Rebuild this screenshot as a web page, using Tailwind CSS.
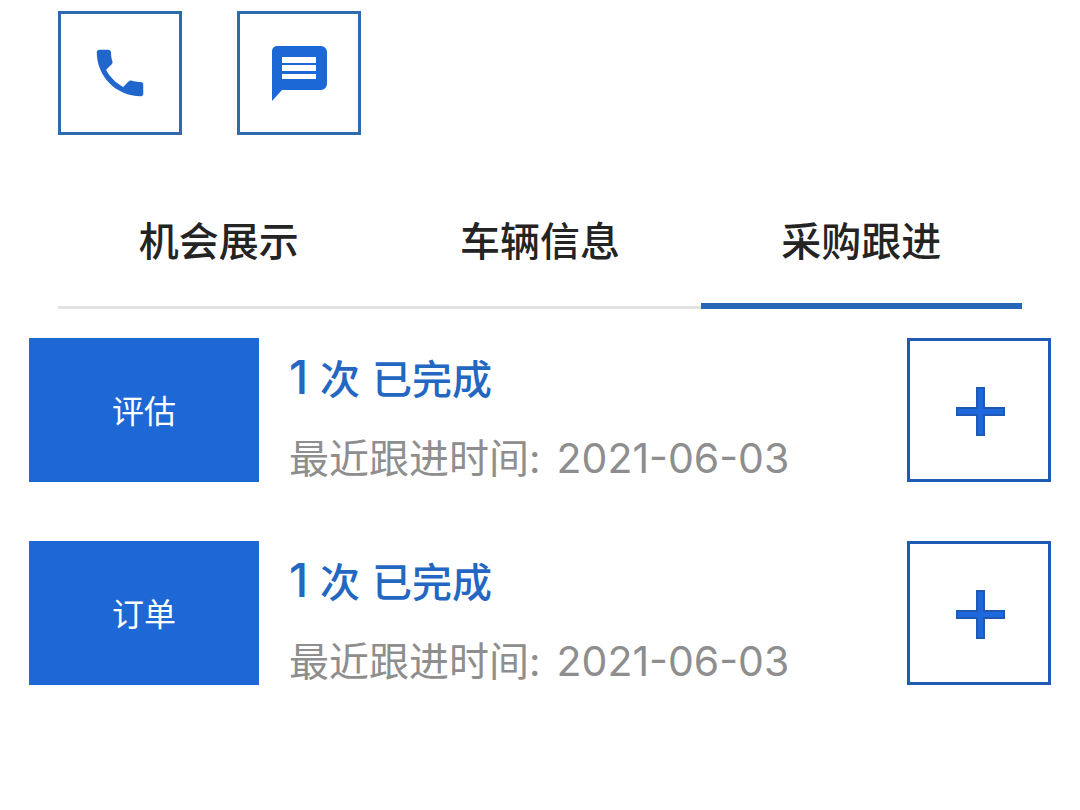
<!DOCTYPE html>
<html lang="zh-CN">

<head>
    <meta charset="UTF-8">
    <meta name="viewport" content="width=device-width, initial-scale=1.0">
    <title>采购跟进</title>
    <script src="https://cdn.jsdelivr.net/npm/@tailwindcss/browser@4"></script>
</head>

<body class="bg-white min-h-screen font-['Inter','Noto_Sans_CJK_SC',sans-serif]">

    <!-- Contact buttons -->
    <div class="flex gap-[55px] px-[58px] pt-[11px]">
        <button type="button" aria-label="电话" class="w-[124px] h-[124px] border-3 border-[#2e6aae] flex items-center justify-center">
            <svg class="w-[62px] h-[62px] fill-[#2066cc]" viewBox="0 0 24 24">
                <path d="M6.62 10.79c1.44 2.83 3.76 5.14 6.59 6.59l2.2-2.2c.27-.27.67-.36 1.02-.24 1.12.37 2.33.57 3.57.57.55 0 1 .45 1 1V20c0 .55-.45 1-1 1-9.39 0-17-7.61-17-17 0-.55.45-1 1-1h3.5c.55 0 1 .45 1 1 0 1.25.2 2.45.57 3.57.11.35.03.74-.25 1.02l-2.2 2.2z" />
            </svg>
        </button>
        <button type="button" aria-label="短信" class="w-[124px] h-[124px] border-3 border-[#2e6aae] flex items-center justify-center">
            <svg class="w-[58px] h-[58px] fill-[#1c68d6]" viewBox="0 0 58 58">
                <path fill-rule="evenodd" d="M7 2H51a6 6 0 0 1 6 6V40a6 6 0 0 1-6 6H12L2 57V7a5 5 0 0 1 5-5ZM12 13V19H46V13ZM12 21V27H46V21ZM12 30V35H46V30Z" />
            </svg>
        </button>
    </div>

    <!-- Tabs -->
    <div role="tablist" class="mx-[58px] mt-[56px] grid grid-cols-3 text-[40px] leading-[60px] font-medium text-[#242424]">
        <button type="button" role="tab" aria-selected="false" class="h-[118px] pt-[21px] border-b-3 border-[#e2e2e2] flex justify-center">机会展示</button>
        <button type="button" role="tab" aria-selected="false" class="h-[118px] pt-[21px] border-b-3 border-[#e2e2e2] flex justify-center">车辆信息</button>
        <button type="button" role="tab" aria-selected="true" class="h-[118px] pt-[21px] border-b-6 border-[#2867b8] flex justify-center">采购跟进</button>
    </div>

    <!-- Follow-up records -->
    <ul class="mt-[29px] px-[29px] flex flex-col gap-[59px]">
        <li class="flex h-[144px]">
            <button type="button" class="w-[230px] shrink-0 pt-[3px] bg-[#1d68d5] text-white text-[32px]">评估</button>
            <div class="flex-1 pl-[30px] pt-[7px]">
                <p class="flex items-baseline gap-[12px] text-[40px] leading-[64px] font-medium text-[#2467c2]">
                    <span class="flex items-baseline gap-[12px]"><span class="text-[46px]">1</span><span>次</span></span>
                    <span>已完成</span>
                </p>
                <p class="mt-[16px] flex items-baseline gap-[16px] text-[40px] leading-[60px] text-[#8e8e8e]">
                    <span>最近跟进时间:</span>
                    <time datetime="2021-06-03" class="text-[41px]">2021-06-03</time>
                </p>
            </div>
            <button type="button" aria-label="新增评估" class="w-[144px] shrink-0 border-3 border-[#1d5bb5] flex items-center justify-center">
                <svg class="w-[52px] h-[52px] fill-[#1c68dc] stroke-[#1f59b4] stroke-2" viewBox="0 0 52 52">
                    <path d="M24 4H31V24H51V31H31V51H24V31H4V24H24Z" />
                </svg>
            </button>
        </li>
        <li class="flex h-[144px]">
            <button type="button" class="w-[230px] shrink-0 pt-[3px] bg-[#1d68d5] text-white text-[32px]">订单</button>
            <div class="flex-1 pl-[30px] pt-[7px]">
                <p class="flex items-baseline gap-[12px] text-[40px] leading-[64px] font-medium text-[#2467c2]">
                    <span class="flex items-baseline gap-[12px]"><span class="text-[46px]">1</span><span>次</span></span>
                    <span>已完成</span>
                </p>
                <p class="mt-[16px] flex items-baseline gap-[16px] text-[40px] leading-[60px] text-[#8e8e8e]">
                    <span>最近跟进时间:</span>
                    <time datetime="2021-06-03" class="text-[41px]">2021-06-03</time>
                </p>
            </div>
            <button type="button" aria-label="新增订单" class="w-[144px] shrink-0 border-3 border-[#1d5bb5] flex items-center justify-center">
                <svg class="w-[52px] h-[52px] fill-[#1c68dc] stroke-[#1f59b4] stroke-2" viewBox="0 0 52 52">
                    <path d="M24 4H31V24H51V31H31V51H24V31H4V24H24Z" />
                </svg>
            </button>
        </li>
    </ul>

</body>

</html>
